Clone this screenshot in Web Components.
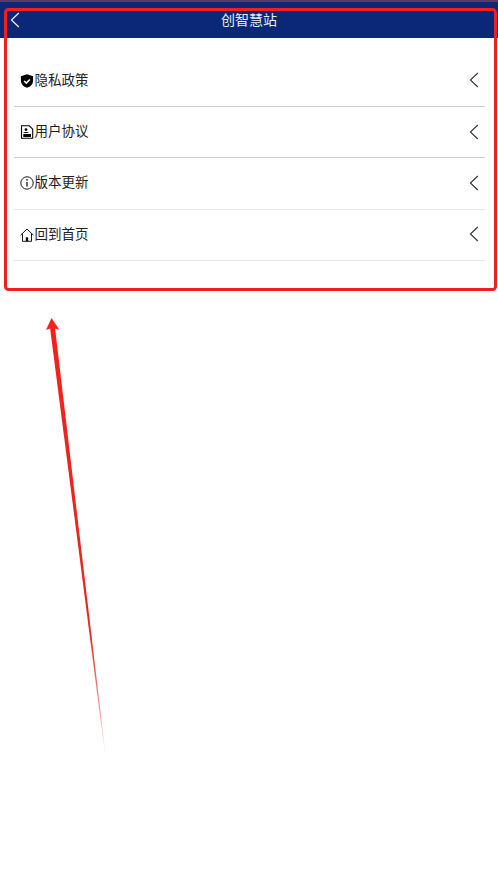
<!DOCTYPE html>
<html lang="zh">
<head>
<meta charset="utf-8">
<style>
    html, body { margin: 0; background: #fff; }
    body { font-family: "Noto Sans CJK SC", "Liberation Sans", sans-serif; }
</style>
</head>
<body>
<settings-page>
    <top-bar>创智慧站</top-bar>
    <menu-list>
        <menu-row line="#cfcfcf">
            <svg slot="icon" viewBox="0 0 14 14" width="14" height="14"><path fill="#000" d="M7 .2 .9 2.300v4.500c0 3.400 2.600 5.900 6.100 7 3.500-1.100 6.100-3.600 6.100-7V2.300z"/><path fill="none" stroke="#fff" stroke-width="1.500" d="M4.200 7l2.100 2.100 3.500-3.700"/></svg>
            隐私政策
        </menu-row>
        <menu-row line="#cfcfcf">
            <svg slot="icon" viewBox="0 0 14 14" width="14" height="14"><path fill="none" stroke="#000" stroke-width="1.100" d="M1.500.8h7.800l3.400 3.400v9.100H1.500z"/><circle cx="6" cy="4.600" r="1.400"/><path d="M3.300 8.100c.5-1.400 4.900-1.400 5.400 0zM3.300 9h7.700v2.900H3.300z"/></svg>
            用户协议
        </menu-row>
        <menu-row line="#e6e6e6">
            <svg slot="icon" viewBox="0 0 14 14" width="14" height="14"><circle cx="7" cy="7" r="6.200" fill="none" stroke="#000" stroke-width=".9"/><path fill="none" stroke="#000" stroke-width="1.200" d="M7 6v4.600"/><circle cx="7" cy="3.900" r=".8"/></svg>
            版本更新
        </menu-row>
        <menu-row line="#e6e6e6">
            <svg slot="icon" viewBox="0 0 14 14" width="14" height="14"><path fill="none" stroke="#000" stroke-width=".9" d="M.6 7.200 7 1l6.400 6.200M2.500 5.600v7.700h9V5.600"/><path d="M5.800 13.300V9.300h2.400v4z"/></svg>
            回到首页
        </menu-row>
    </menu-list>
    <red-annotation></red-annotation>
</settings-page>

<script>
class SettingsPage extends HTMLElement {
    constructor() {
        super();
        const shadowRoot = this.attachShadow({mode: 'open'});
        shadowRoot.innerHTML = `
        <style>
            :host { display: block; position: relative; width: 498px; height: 876px; overflow: hidden; background: #fff; }
        </style>
        <slot></slot>`;
    }
}

class TopBar extends HTMLElement {
    constructor() {
        super();
        const shadowRoot = this.attachShadow({mode: 'open'});
        shadowRoot.innerHTML = `
        <style>
            :host { display: flex; align-items: center; justify-content: center; position: relative; box-sizing: border-box; height: 38px; padding-bottom: 3px; background: #0b2777; border-top: 2px solid #5b3a63; color: #e8ecf6; font-size: 14px; }
            svg { position: absolute; left: 10px; top: 10px; }
        </style>
        <svg viewBox="0 0 10 16" width="10" height="16"><path fill="none" stroke="#f0f3fa" stroke-width="1.200" d="M8.800 1 1.500 8l7.300 7"/></svg>
        <span><slot></slot></span>`;
    }
}

class MenuList extends HTMLElement {
    constructor() {
        super();
        const shadowRoot = this.attachShadow({mode: 'open'});
        shadowRoot.innerHTML = `
        <style>
            :host { display: block; padding: 17.700px 13px 0 14px; }
        </style>
        <slot></slot>`;
    }
}

class MenuRow extends HTMLElement {
    constructor() {
        super();
        const shadowRoot = this.attachShadow({mode: 'open'});
        shadowRoot.innerHTML = `
        <style>
            :host { display: flex; align-items: center; height: 50.300px; border-bottom: 1px solid var(--line); padding-left: 6px; padding-right: 6px; color: #222; font-size: 13.500px; }
            .icon { display: flex; width: 14px; height: 14px; }
            .label { flex: 1; position: relative; top: -2px; left: .5px; }
            .chevron { position: relative; top: -.5px; }
        </style>
        <span class="icon"><slot name="icon"></slot></span>
        <span class="label"><slot></slot></span>
        <svg class="chevron" viewBox="0 0 10 16" width="10" height="16"><path fill="none" stroke="#333" stroke-width="1.100" d="M8.800 1 1.400 8l7.400 7"/></svg>`;
    }

    connectedCallback() {
        this.style.setProperty('--line', this.getAttribute('line'));
    }
}

class RedAnnotation extends HTMLElement {
    constructor() {
        super();
        const shadowRoot = this.attachShadow({mode: 'open'});
        shadowRoot.innerHTML = `
        <style>
            :host { position: absolute; inset: 0; pointer-events: none; }
            svg { display: block; }
        </style>
        <svg width="498" height="876" viewBox="0 0 498 876">
            <defs>
                <linearGradient id="fade" gradientUnits="userSpaceOnUse" x1="52" y1="330" x2="105" y2="752">
                    <stop offset="0" stop-color="#f5201a"/>
                    <stop offset=".72" stop-color="#e02a24"/>
                    <stop offset=".9" stop-color="#e8605a" stop-opacity=".7"/>
                    <stop offset="1" stop-color="#f5a09a" stop-opacity=".15"/>
                </linearGradient>
            </defs>
            <rect x="5.500" y="9.500" width="490" height="280" rx="3" fill="none" stroke="#f1201f" stroke-width="3"/>
            <path fill="url(#fade)" d="M49.800 326 54.800 326 105.300 752 104.700 752z"/>
            <path fill="#f5201a" d="M51.500 318 59.500 330 52.500 327.500 46 330z"/>
        </svg>`;
    }
}

customElements.define('settings-page', SettingsPage);
customElements.define('top-bar', TopBar);
customElements.define('menu-list', MenuList);
customElements.define('menu-row', MenuRow);
customElements.define('red-annotation', RedAnnotation);
</script>
</body>
</html>
